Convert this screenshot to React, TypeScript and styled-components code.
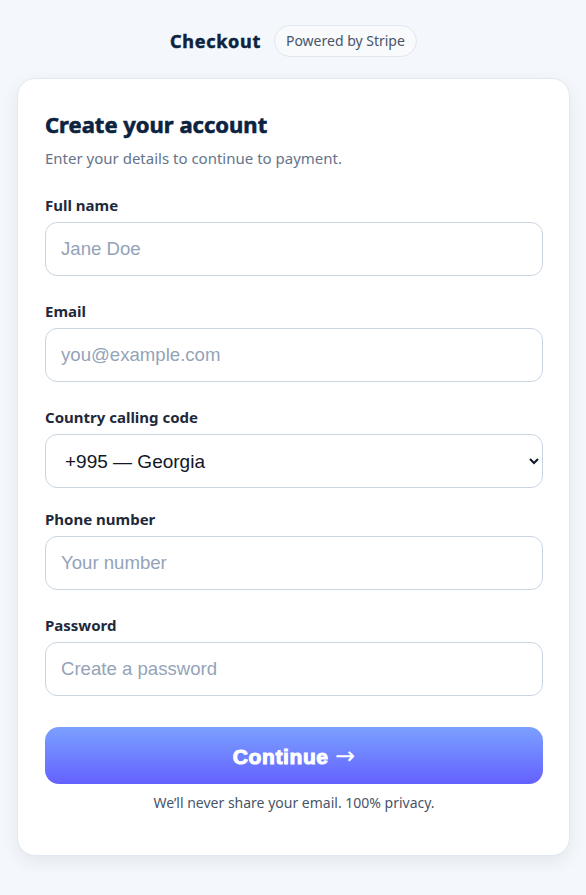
import * as React from "react";
import styled, { createGlobalStyle } from "styled-components";

const GlobalStyle = createGlobalStyle`
  html, body {
    margin: 0;
    padding: 0;
    background: #f4f7fb;
    font-family: "Noto Sans", "Open Sans", sans-serif;
  }
  * { box-sizing: border-box; }
`;

type FieldDef = {
  label: string;
  type?: string;
  placeholder?: string;
  select?: boolean;
};

const fields: FieldDef[] = [
  { label: "Full name", type: "text", placeholder: "Jane Doe" },
  { label: "Email", type: "email", placeholder: "you@example.com" },
  { label: "Country calling code", select: true },
  { label: "Phone number", type: "tel", placeholder: "Your number" },
  { label: "Password", type: "password", placeholder: "Create a password" },
];

const App: React.FC = () => {
  return (
    <Page>
      <GlobalStyle />
      <Header>
        <Brand>Checkout</Brand>
        <Badge>Powered by Stripe</Badge>
      </Header>
      <Card>
        <Title>Create your account</Title>
        <Subtitle>Enter your details to continue to payment.</Subtitle>
        <Form onSubmit={(e) => e.preventDefault()}>
          {fields.map((f, i) => (
            <Field
              key={f.label}
              $gap={f.select ? 21 : i === fields.length - 1 ? 31 : 25}
            >
              <Label>{f.label}</Label>
              {f.select ? (
                <Select defaultValue="+995">
                  <option value="+995">+995 — Georgia</option>
                  <option value="+1">+1 — United States</option>
                  <option value="+44">+44 — United Kingdom</option>
                </Select>
              ) : (
                <Input type={f.type} placeholder={f.placeholder} />
              )}
            </Field>
          ))}
          <Button type="submit">
            Continue <Arrow>→</Arrow>
          </Button>
        </Form>
        <Note>We’ll never share your email. 100% privacy.</Note>
      </Card>
    </Page>
  );
};

export default App;

/* Styles */
const Page = styled.div`
  padding: 25px 16px 16px 17px;
`;

const Header = styled.div`
  display: flex;
  align-items: center;
  justify-content: center;
  gap: 13px;
  height: 32px;
  margin-bottom: 21px;
`;

const Brand = styled.span`
  font-size: 18px;
  font-weight: 700;
  letter-spacing: 0.7px;
  -webkit-text-stroke: 0.5px #0c2340;
  color: #0c2340;
`;

const Badge = styled.span`
  font-size: 14px;
  color: #475569;
  background: #f8fafc;
  border: 1px solid #e2e8f0;
  border-radius: 999px;
  padding: 0 11px;
  height: 32px;
  line-height: 30px;
`;

const Card = styled.div`
  background: #fff;
  border: 1px solid #e2e8f0;
  border-radius: 18px;
  box-shadow: 0 6px 18px rgba(15, 23, 42, 0.07);
  padding: 30px 26px 42px 27px;
`;

const Title = styled.h1`
  margin: 0;
  font-size: 22px;
  line-height: 30px;
  font-weight: 700;
  -webkit-text-stroke: 0.6px #0c2340;
  color: #0c2340;
`;

const Subtitle = styled.p`
  margin: 8px 0 0;
  font-size: 15px;
  line-height: 22px;
  color: #64748b;
`;

const Form = styled.form`
  margin-top: 26px;
  display: flex;
  flex-direction: column;
`;

const Field = styled.div<{ $gap: number }>`
  display: flex;
  flex-direction: column;
  margin-bottom: ${(p) => p.$gap}px;
`;

const Label = styled.label`
  font-size: 15px;
  line-height: 20px;
  font-weight: 700;
  color: #1e293b;
  margin-bottom: 7px;
`;

const Input = styled.input`
  height: 54px;
  width: 100%;
  border: 1px solid #cbd5e1;
  border-radius: 12px;
  padding: 0 15px;
  font-family: "Liberation Sans", Arial, sans-serif;
  font-size: 18.6px;
  color: #0f172a;
  background: #fff;
  outline: none;
  &::placeholder {
    color: #94a3b8;
  }
`;

const Select = styled.select`
  height: 54px;
  width: 100%;
  border: 1px solid #cbd5e1;
  border-radius: 12px;
  padding: 0 10px 0 15px;
  font-family: "Liberation Sans", Arial, sans-serif;
  font-size: 19px;
  color: #111827;
  background: #fff;
  outline: none;
`;

const Button = styled.button`
  height: 57px;
  width: 100%;
  border: none;
  border-radius: 14px;
  background: linear-gradient(180deg, #7ba1ff 0%, #6461ff 100%);
  color: #fff;
  font-family: "Liberation Sans", Arial, sans-serif;
  font-size: 21px;
  font-weight: 700;
  -webkit-text-stroke: 1px #fff;
  letter-spacing: 0.6px;
  cursor: pointer;
`;

const Arrow = styled.span`
  font-family: "DejaVu Sans", sans-serif;
  font-weight: 400;
  font-size: 24px;
  letter-spacing: 0;
  -webkit-text-stroke: 0;
`;

const Note = styled.p`
  margin: 9px 0 0;
  text-align: center;
  font-size: 14px;
  line-height: 20px;
  color: #475569;
`;
